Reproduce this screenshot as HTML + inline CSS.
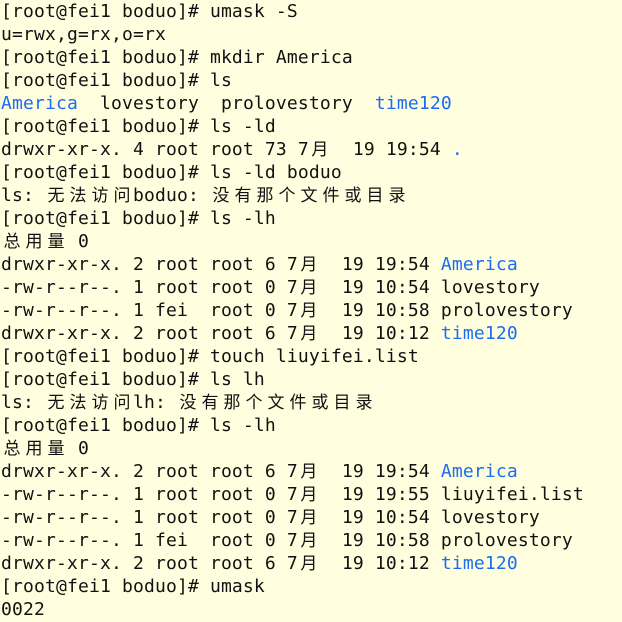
<!DOCTYPE html>
<html><head><meta charset="utf-8"><style>
html,body{margin:0;padding:0;background:#ffffdf;width:622px;height:622px;overflow:hidden}
#t{position:absolute;left:1px;top:0;font-family:"DejaVu Sans Mono","Liberation Mono","Noto Sans CJK SC",monospace;font-size:18px;letter-spacing:0.16px;line-height:23px;color:#111;white-space:pre}
#t div{height:23px;overflow:visible}
.c{display:inline-block;width:22px;text-align:center;letter-spacing:0;font-family:"Noto Sans CJK SC","WenQuanYi Zen Hei",sans-serif;font-size:17px;line-height:18px;height:18px}
.b{color:#1a6cf0}
</style></head><body><div id="t"><div>[root@fei1 boduo]# umask -S</div><div>u=rwx,g=rx,o=rx</div><div>[root@fei1 boduo]# mkdir America</div><div>[root@fei1 boduo]# ls</div><div><span class="b">America</span>  lovestory  prolovestory  <span class="b">time120</span></div><div>[root@fei1 boduo]# ls -ld</div><div>drwxr-xr-x. 4 root root 73 7<span class="c">月</span>  19 19:54 <span class="b">.</span></div><div>[root@fei1 boduo]# ls -ld boduo</div><div>ls: <span class="c">无</span><span class="c">法</span><span class="c">访</span><span class="c">问</span>boduo: <span class="c">没</span><span class="c">有</span><span class="c">那</span><span class="c">个</span><span class="c">文</span><span class="c">件</span><span class="c">或</span><span class="c">目</span><span class="c">录</span></div><div>[root@fei1 boduo]# ls -lh</div><div><span class="c">总</span><span class="c">用</span><span class="c">量</span> 0</div><div>drwxr-xr-x. 2 root root 6 7<span class="c">月</span>  19 19:54 <span class="b">America</span></div><div>-rw-r--r--. 1 root root 0 7<span class="c">月</span>  19 10:54 lovestory</div><div>-rw-r--r--. 1 fei  root 0 7<span class="c">月</span>  19 10:58 prolovestory</div><div>drwxr-xr-x. 2 root root 6 7<span class="c">月</span>  19 10:12 <span class="b">time120</span></div><div>[root@fei1 boduo]# touch liuyifei.list</div><div>[root@fei1 boduo]# ls lh</div><div>ls: <span class="c">无</span><span class="c">法</span><span class="c">访</span><span class="c">问</span>lh: <span class="c">没</span><span class="c">有</span><span class="c">那</span><span class="c">个</span><span class="c">文</span><span class="c">件</span><span class="c">或</span><span class="c">目</span><span class="c">录</span></div><div>[root@fei1 boduo]# ls -lh</div><div><span class="c">总</span><span class="c">用</span><span class="c">量</span> 0</div><div>drwxr-xr-x. 2 root root 6 7<span class="c">月</span>  19 19:54 <span class="b">America</span></div><div>-rw-r--r--. 1 root root 0 7<span class="c">月</span>  19 19:55 liuyifei.list</div><div>-rw-r--r--. 1 root root 0 7<span class="c">月</span>  19 10:54 lovestory</div><div>-rw-r--r--. 1 fei  root 0 7<span class="c">月</span>  19 10:58 prolovestory</div><div>drwxr-xr-x. 2 root root 6 7<span class="c">月</span>  19 10:12 <span class="b">time120</span></div><div>[root@fei1 boduo]# umask</div><div>0022</div></div></body></html>
